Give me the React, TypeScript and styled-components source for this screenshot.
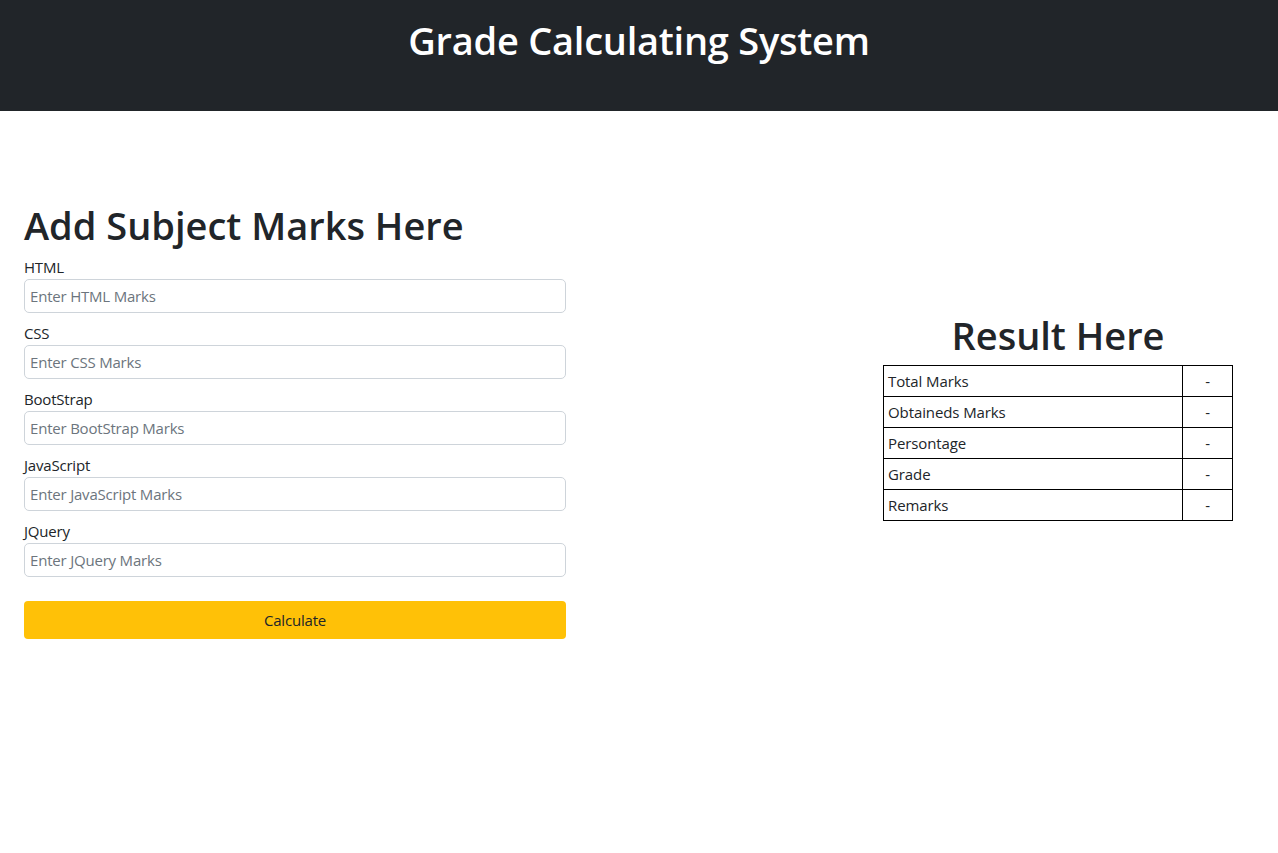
import React from "react";
import styled, { createGlobalStyle } from "styled-components";

const Global = createGlobalStyle`
  * { box-sizing: border-box; }
  body {
    margin: 0;
    font-family: "Open Sans", "Noto Sans", Arial, sans-serif;
    color: #212529;
    background: #fff;
  }
`;

const Header = styled.header`
  background: #212529;
  height: 111px;
  padding-top: 16px;
`;

const Title = styled.h1`
  margin: 0;
  color: #fff;
  text-align: center;
  font-size: 38px;
  font-weight: 600;
  line-height: 48px;
  letter-spacing: -0.25px;
`;

const Main = styled.main`
  display: flex;
  justify-content: space-between;
  align-items: center;
  padding: 90px 45px 0 24px;
`;

const FormCol = styled.section`
  width: 542px;
  display: flex;
  flex-direction: column;
`;

const Heading = styled.h2`
  margin: 0 0 6px;
  font-size: 38px;
  font-weight: 600;
  line-height: 48px;
  letter-spacing: 0;
`;

const Field = styled.div`
  display: flex;
  flex-direction: column;
  margin-bottom: 8px;
`;

const Label = styled.label`
  font-size: 15px;
  line-height: 24px;
  letter-spacing: -0.2px;
`;

const Input = styled.input`
  height: 34px;
  width: 100%;
  border: 1px solid #ced4da;
  border-radius: 5px;
  padding: 0 5px;
  font-family: inherit;
  font-size: 15px;
  letter-spacing: -0.2px;
  color: #212529;
  &::placeholder { color: #6c757d; }
`;

const Button = styled.button`
  margin-top: 16px;
  height: 38px;
  width: 100%;
  border: none;
  border-radius: 4px;
  background: #ffc107;
  color: #212529;
  font-family: inherit;
  font-size: 15px;
  letter-spacing: -0.2px;
`;

const ResultCol = styled.section`
  width: 350px;
  display: flex;
  flex-direction: column;
  align-items: center;
  padding-bottom: 9px;
`;

const ResultTitle = styled.h2`
  margin: 0 0 6px;
  font-size: 38px;
  font-weight: 600;
  line-height: 48px;
  letter-spacing: 0;
`;

const Table = styled.table`
  width: 350px;
  border-collapse: collapse;
`;

const Cell = styled.td<{ $center?: boolean }>`
  border: 1px solid #000;
  height: 31px;
  padding: 0 4px;
  font-size: 15px;
  letter-spacing: -0.1px;
  text-align: ${(p) => (p.$center ? "center" : "left")};
  width: ${(p) => (p.$center ? "50px" : "auto")};
`;

const subjects = ["HTML", "CSS", "BootStrap", "JavaScript", "JQuery"];
const results = ["Total Marks", "Obtaineds Marks", "Persontage", "Grade", "Remarks"];

export default function App() {
  return (
    <>
      <Global />
      <Header>
        <Title>Grade Calculating System</Title>
      </Header>
      <Main>
        <FormCol>
          <Heading>Add Subject Marks Here</Heading>
          {subjects.map((s) => (
            <Field key={s}>
              <Label>{s}</Label>
              <Input placeholder={`Enter ${s} Marks`} />
            </Field>
          ))}
          <Button>Calculate</Button>
        </FormCol>
        <ResultCol>
          <ResultTitle>Result Here</ResultTitle>
          <Table>
            <tbody>
              {results.map((r) => (
                <tr key={r}>
                  <Cell>{r}</Cell>
                  <Cell $center>-</Cell>
                </tr>
              ))}
            </tbody>
          </Table>
        </ResultCol>
      </Main>
    </>
  );
}
